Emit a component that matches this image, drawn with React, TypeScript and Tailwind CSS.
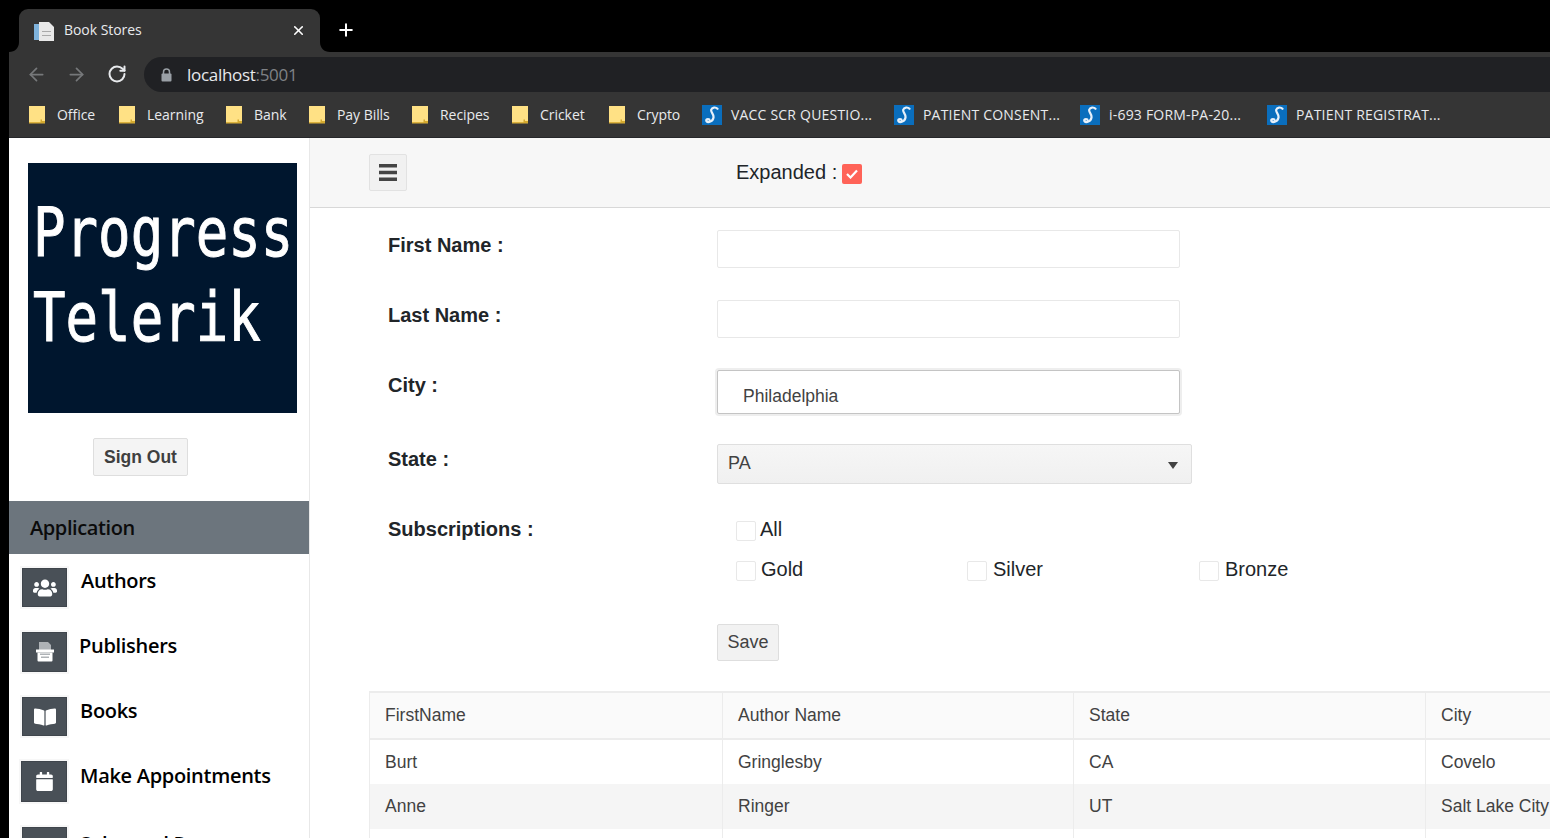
import { ArrowLeft, ArrowRight, RotateCw, X, Plus } from 'lucide-react';
import { FaBookOpen, FaCalendar, FaUsers } from 'react-icons/fa';

const folders = [
  { label: 'Office', width: 'w-[90px]' },
  { label: 'Learning', width: 'w-[107px]' },
  { label: 'Bank', width: 'w-[83px]' },
  { label: 'Pay Bills', width: 'w-[103px]' },
  { label: 'Recipes', width: 'w-[100px]' },
  { label: 'Cricket', width: 'w-[97px]' },
  { label: 'Crypto', width: 'w-[93px]' },
];

const docs = [
  { label: 'VACC SCR QUESTIO...', width: 'w-[192px]' },
  { label: 'PATIENT CONSENT...', width: 'w-[186px]' },
  { label: 'i-693 FORM-PA-20...', width: 'w-[187px]' },
  { label: 'PATIENT REGISTRAT...', width: 'w-[200px]' },
];

const rows = [
  ['Burt', 'Gringlesby', 'CA', 'Covelo'],
  ['Anne', 'Ringer', 'UT', 'Salt Lake City'],
  ['', '', '', ''],
];

function FolderIcon() {
  return (
    <svg width="17" height="18" viewBox="0 0 17 18" className="shrink-0">
      <path d="M0 0h16v17H0z" fill="#ffe185" />
      <path d="M0 16h16v1.500H0z" fill="#dcb23c" />
      <path d="M11.500 17v-3.500H13V15h3v2z" fill="#d4a92f" />
    </svg>
  );
}

function DocIcon() {
  return (
    <span className="flex h-[20px] w-[20px] shrink-0 items-center justify-center bg-[#0a6ebd]">
      <svg width="16" height="18" viewBox="0 0 16 18" fill="none" stroke="#e6f0fa" strokeWidth="2.2" strokeLinecap="round">
        <path d="M13.500 2.800C11.800 .9 8 1 7.200 3.800 6.600 6.400 10 8 9.500 11.500 9 15.500 4 17.300 2.400 15 1.800 13.500 3.800 12.400 5.300 13.500" />
      </svg>
    </span>
  );
}

function MenuIcon({ children, box }: { children: React.ReactNode; box: string }) {
  return (
    <span className={`flex items-center justify-center border border-[#3f454c] bg-[#495057] text-white shadow-[0_0_0_2px_#f7f7f7] ${box}`}>
      {children}
    </span>
  );
}

function PublisherIcon() {
  return (
    <svg width="18" height="20" viewBox="0 0 18 20">
      <path d="M3 0h9l3 3v5H3z" fill="#aeb2b6" />
      <path d="M0 7.500h18v3H0z" fill="#fff" />
      <path d="M1.500 10.500h15v8a1 1 0 0 1-1 1h-13a1 1 0 0 1-1-1z" fill="#fff" />
      <path d="M4 11.500h10v1.500H4zM5 14.500h8V16H5z" fill="#aeb2b6" />
    </svg>
  );
}

function Checkbox() {
  return <span className="h-[20px] w-[20px] shrink-0 rounded-[2px] border border-[#e8e8e8] bg-white" />;
}

function BrowserChrome() {
  return (
    <div className="font-['Open_Sans',sans-serif]">
      {/* Tab strip */}
      <div className="flex h-[52px] items-end bg-black pl-[19px]">
        <div className="relative flex h-[43px] w-[301px] items-center rounded-t-[9px] bg-[#353535] pl-[15px] pr-[14px]">
          <svg className="absolute bottom-0 left-[-10px]" width="10" height="10" viewBox="0 0 10 10">
            <path d="M0 10C6 10 10 6 10 0V10z" fill="#353535" />
          </svg>
          <svg className="absolute bottom-0 right-[-10px]" width="10" height="10" viewBox="0 0 10 10">
            <path d="M10 10C4 10 0 6 0 0V10z" fill="#353535" />
          </svg>
          <svg width="20" height="20" viewBox="0 0 20 20" className="shrink-0">
            <path d="M0 3h6v16H0z" fill="#7fb3dc" />
            <path d="M5 1h10l5 5v14H5z" fill="#e8e8e8" />
            <path d="M8 10h9v1H8zM8 14h9v1H8z" fill="#a9a9a9" />
          </svg>
          <span className="mb-[2px] ml-[10px] flex-1 text-[14px] tracking-[-0.05px] text-[#e8eaed]">Book Stores</span>
          <X className="h-[15px] w-[15px] text-white" strokeWidth={2.5} />
        </div>
        <Plus className="mb-[12px] ml-[16px] h-[20px] w-[20px] text-white" strokeWidth={2.4} />
      </div>

      {/* Toolbar */}
      <div className="ml-[9px] flex h-[44px] items-start bg-[#353535] pl-[17px] pt-[5px]">
        <ArrowLeft className="mt-[7px] h-[21px] w-[21px] text-[#76787a]" strokeWidth={2} />
        <ArrowRight className="ml-[19px] mt-[7px] h-[21px] w-[21px] text-[#76787a]" strokeWidth={2} />
        <RotateCw className="ml-[20px] mt-[7px] h-[20px] w-[20px] text-[#e8eaed]" strokeWidth={2.4} />
        <div className="ml-[17px] flex h-[35px] flex-1 items-center rounded-l-[18px] bg-[#202124] pl-[17px]">
          <svg width="11" height="14" viewBox="0 0 11 14" className="shrink-0">
            <path d="M2.500 6V4a3 3 0 0 1 6 0v2" fill="none" stroke="#9aa0a6" strokeWidth="1.500" />
            <rect x="0.500" y="5.500" width="10" height="8" rx="1" fill="#9aa0a6" />
          </svg>
          <span className="ml-[15px] text-[17px] tracking-[-0.3px] text-[#e8eaed]">
            localhost<span className="text-[#7f8286]">:5001</span>
          </span>
        </div>
      </div>

      {/* Bookmarks */}
      <div className="ml-[9px] flex h-[42px] items-center border-b border-[#26272a] bg-[#353535] pb-[3px] pl-[20px]">
        {folders.map((f) => (
          <div key={f.label} className={`flex shrink-0 items-center gap-[11px] ${f.width}`}>
            <FolderIcon />
            <span className="mb-[2px] text-[14px] tracking-[-0.05px] text-[#e8eaed]">{f.label}</span>
          </div>
        ))}
        {docs.map((d) => (
          <div key={d.label} className={`flex shrink-0 items-center gap-[9px] ${d.width}`}>
            <DocIcon />
            <span className="mb-[2px] whitespace-nowrap text-[14px] tracking-[0.2px] text-[#e8eaed]">{d.label}</span>
          </div>
        ))}
      </div>
    </div>
  );
}

function Sidebar() {
  return (
    <aside className="w-[301px] shrink-0 overflow-hidden border-r border-[#e8e8e8] bg-white">
      <div className="pl-[19px] pt-[25px]">
        <div className="h-[250px] w-[269px] overflow-hidden bg-[#00162e] pl-[5px] pt-[27px] font-['DejaVu_Sans_Mono',monospace] text-[68px] leading-[85px] text-white [-webkit-text-stroke:1px_white]">
          <div className="origin-left scale-x-[0.795] whitespace-nowrap">Progress</div>
          <div className="origin-left scale-x-[0.795] whitespace-nowrap">Telerik</div>
        </div>
      </div>
      <div className="pl-[84px] pt-[25px]">
        <button className="h-[38px] w-[95px] rounded-[2px] border border-[#dedede] bg-[#f4f4f4] font-['Liberation_Sans',sans-serif] text-[17.5px] font-bold text-[#3f3f3f]">
          Sign Out
        </button>
      </div>
      <div className="mt-[25px] flex h-[53px] items-center bg-[#6c757d] pl-[21px] font-['Open_Sans',sans-serif] text-[20px] font-semibold tracking-[-0.4px] text-[#0b0b0b]">
        Application
      </div>
      <nav className="font-['Open_Sans',sans-serif] text-[20px] font-semibold tracking-[-0.3px] text-black">
        <div className="flex items-start pl-[13px] pt-[14px]">
          <MenuIcon box="h-[39px] w-[45px]"><FaUsers size={24} /></MenuIcon>
          <span className="ml-[14px] leading-[26px]">Authors</span>
        </div>
        <div className="flex items-start pl-[13px] pt-[25px]">
          <MenuIcon box="h-[40px] w-[45px]"><PublisherIcon /></MenuIcon>
          <span className="ml-[12px] mt-[1px] leading-[26px]">Publishers</span>
        </div>
        <div className="flex items-start pl-[13px] pt-[25px]">
          <MenuIcon box="h-[39px] w-[45px]"><FaBookOpen size={22} /></MenuIcon>
          <span className="ml-[13px] mt-[1px] leading-[26px]">Books</span>
        </div>
        <div className="flex items-start pl-[12px] pt-[25px]">
          <MenuIcon box="h-[41px] w-[46px]"><FaCalendar size={19} /></MenuIcon>
          <span className="ml-[13px] mt-[2px] leading-[26px]">Make Appointments</span>
        </div>
        <div className="flex items-start pl-[13px] pt-[25px]">
          <MenuIcon box="h-[40px] w-[45px]"><span /></MenuIcon>
          <span className="ml-[13px] mt-[4px] leading-[26px]">Sales and R</span>
        </div>
      </nav>
    </aside>
  );
}

function AuthorForm() {
  const label = 'w-[329px] shrink-0 text-[20px] font-bold leading-[30px] text-[#212529]';
  const input = 'h-[38px] w-[463px] rounded-[2px] border border-[#e8e8e8] bg-white';
  return (
    <div className="pl-[78px] pt-[22px]">
      <div className="flex h-[70px]">
        <span className={label}>First Name :</span>
        <div className={input} />
      </div>
      <div className="flex h-[70px]">
        <span className={label}>Last Name :</span>
        <div className={input} />
      </div>
      <div className="flex h-[74px]">
        <span className={label}>City :</span>
        <div className="h-[44px] w-[463px] rounded-[2px] border border-[#c4c4c4] bg-white pl-[25px] pt-[15px] text-[17.5px] leading-[21px] text-[#424242] shadow-[0_0_0_2px_#eeeeee]">
          Philadelphia
        </div>
      </div>
      <div className="flex h-[70px]">
        <span className={label}>State :</span>
        <div className="flex h-[40px] w-[475px] items-center justify-between rounded-[2px] border border-[#dfdfdf] bg-linear-to-b from-[#f6f6f6] to-[#f0f0f0] pb-[2px] pl-[10px] pr-[13px] text-[18px] text-[#424242]">
          PA
          <svg width="10" height="7" viewBox="0 0 10 7" className="mt-[4px]"><path d="M0 0h10L5 7z" fill="#424242" /></svg>
        </div>
      </div>
      <div className="flex">
        <span className={label}>Subscriptions :</span>
        <div className="text-[20px] leading-[24px] text-[#212529]">
          <div className="flex h-[40px] items-start gap-[4px] pl-[19px] pt-[7px]">
            <Checkbox />
            <span className="mt-[-4px]">All</span>
          </div>
          <div className="flex h-[40px] items-start pl-[19px] pt-[7px]">
            <div className="flex w-[231px] gap-[5px]"><Checkbox /><span className="mt-[-4px]">Gold</span></div>
            <div className="flex w-[232px] gap-[6px]"><Checkbox /><span className="mt-[-4px]">Silver</span></div>
            <div className="flex gap-[6px]"><Checkbox /><span className="mt-[-4px]">Bronze</span></div>
          </div>
        </div>
      </div>
      <div className="pl-[329px] pt-[30px]">
        <button className="h-[37px] w-[62px] rounded-[2px] border border-[#dedede] bg-[#f2f2f2] text-[18px] text-[#424242]">
          Save
        </button>
      </div>
    </div>
  );
}

function AuthorGrid() {
  return (
    <div className="ml-[59px] mt-[30px] w-[1400px]">
      <table className="w-full table-fixed border-collapse text-[17.5px] text-[#424242]">
        <colgroup>
          <col className="w-[353px]" />
          <col className="w-[351px]" />
          <col className="w-[352px]" />
          <col />
        </colgroup>
        <thead>
          <tr className="h-[47px] border-y-2 border-[#ececec] bg-[#fafafa]">
            {['FirstName', 'Author Name', 'State', 'City'].map((h) => (
              <th key={h} className="border-x border-[#ececec] pl-[15px] text-left font-normal">{h}</th>
            ))}
          </tr>
        </thead>
        <tbody>
          {rows.map((r, i) => (
            <tr key={i} className={`h-[45px] ${i % 2 === 1 ? 'bg-[#f5f5f5]' : 'bg-white'}`}>
              {r.map((c, j) => (
                <td key={j} className="whitespace-nowrap border-x border-[#ececec] pl-[15px]">{c}</td>
              ))}
            </tr>
          ))}
        </tbody>
      </table>
    </div>
  );
}

export default function App() {
  return (
    <div className="h-[838px] w-[1550px] overflow-hidden bg-black font-['Liberation_Sans',sans-serif]">
      <BrowserChrome />
      <div className="ml-[9px] flex h-[700px] bg-white">
        <Sidebar />
        <main className="min-w-0 flex-1 overflow-hidden">
          <div className="flex h-[70px] items-center border-b border-[#d8d8d8] bg-[#f7f7f7] pl-[59px]">
            <button className="flex h-[37px] w-[38px] items-center justify-center rounded-[2px] border border-[#e2e2e2] bg-[#f1f1f1]">
              <svg width="18" height="17" viewBox="0 0 18 17" fill="#444">
                <path d="M0 0h18v3.500H0zM0 6.750h18v3.500H0zM0 13.500h18V17H0z" />
              </svg>
            </button>
            <span className="mb-[2px] ml-[329px] text-[20px] text-[#212529]">Expanded :</span>
            <span className="ml-[5px] mt-[2px] flex h-[20px] w-[20px] items-center justify-center rounded-[2px] bg-[#ff6358]">
              <svg width="12" height="10" viewBox="0 0 12 10" fill="none" stroke="#fff" strokeWidth="2.200">
                <path d="M1 5l3.500 3.500L11 1.500" />
              </svg>
            </span>
          </div>
          <AuthorForm />
          <AuthorGrid />
        </main>
      </div>
    </div>
  );
}
